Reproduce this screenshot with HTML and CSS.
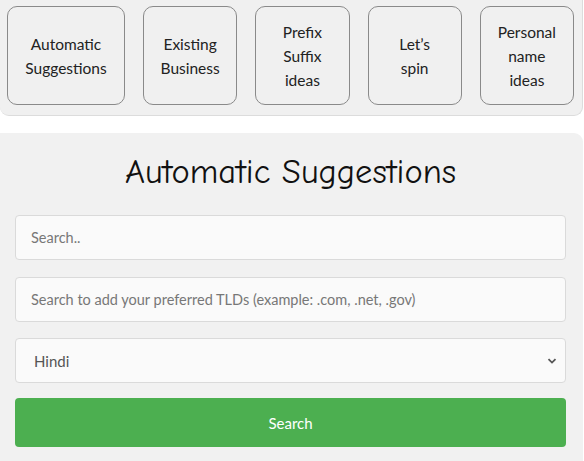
FILE: index.html
```html
<!DOCTYPE html>
<html lang="en">
<head>
    <meta charset="UTF-8">
    <meta name="viewport" content="width=device-width, initial-scale=1.0">
    <title>Domain Name Ideas</title>
    <link rel="stylesheet" href="styles.css">
</head>
<body>
    <!-- Onglets -->
    <nav class="tabs">
        <button class="tab tab-wide">Automatic<br>Suggestions</button>
        <button class="tab">Existing<br>Business</button>
        <button class="tab">Prefix<br>Suffix<br>ideas</button>
        <button class="tab">Let’s<br>spin</button>
        <button class="tab">Personal<br>name<br>ideas</button>
    </nav>

    <!-- Formulaire -->
    <div class="panel">
        <h1>Automatic Suggestions</h1>
        <form class="search-form">
            <input type="text" class="field" placeholder="Search..">
            <input type="text" class="field" placeholder="Search to add your preferred TLDs (example: .com, .net, .gov)">
            <div class="select-wrap">
                <select class="field">
                    <option>Hindi</option>
                    <option>English</option>
                </select>
                <svg class="chevron" width="10" height="6" viewBox="0 0 10 6">
                    <path d="M1.5 1.2 L5 4.6 L8.5 1.2" fill="none" stroke="#555" stroke-width="1.8"/>
                </svg>
            </div>
            <button type="button" class="search-btn">Search</button>
        </form>
    </div>
</body>
</html>
```

FILE: styles.css
```css
/* CSS */
body {
    font-family: Lato, "Open Sans", sans-serif;
    background-color: #ffffff;
    margin: 0;
    padding: 0;
}

.tabs {
    display: flex;
    gap: 18px;
    padding: 6px 8px 10px 7px;
    width: 583px;
    box-sizing: border-box;
    background-color: #f0f0f0;
    border: 1px solid #dcdcdc;
    border-top: none;
    border-left: none;
    border-radius: 0 0 9px 9px;
}

.tab {
    flex: 1 1 0;
    height: 99px;
    padding: 0 4px;
    background-color: #f0f0f0;
    border: 1px solid #8a8a8a;
    border-radius: 10px;
    font-family: inherit;
    font-size: 15.5px;
    line-height: 24px;
    color: #222;
    cursor: pointer;
}

.tab-wide {
    flex: 0 0 118px;
}

.panel {
    margin-top: 17px;
    width: 583px;
    min-height: 330px;
    box-sizing: border-box;
    padding: 14px 17px 14px 15px;
    background-color: #f1f1f1;
    border-radius: 0 9px 0 0;
}

.panel h1 {
    margin: 0 0 18px;
    text-align: center;
    font-family: "Comic Sans MS", "Comic Neue", "DejaVu Sans", sans-serif;
    font-weight: normal;
    font-size: 34.5px;
    line-height: 50px;
    color: #111;
}

.search-form {
    display: flex;
    flex-direction: column;
    gap: 17px;
}

.field {
    width: 100%;
    height: 45px;
    box-sizing: border-box;
    padding: 0 15px;
    background-color: #fafafa;
    border: 1px solid #dadada;
    border-radius: 4px;
    font-family: inherit;
    font-size: 14.5px;
    color: #444;
    outline: none;
}

.field::placeholder {
    color: #777;
}

.select-wrap {
    position: relative;
    margin-top: -1px;
}

.select-wrap select {
    appearance: none;
    -webkit-appearance: none;
    color: #555;
    padding-left: 18px;
    font-size: 15px;
}

.chevron {
    position: absolute;
    right: 9px;
    top: 20px;
    pointer-events: none;
}

.search-btn {
    height: 49px;
    margin-top: -2px;
    background-color: #4caf50;
    color: white;
    border: none;
    border-radius: 4px;
    font-family: inherit;
    font-size: 15px;
    cursor: pointer;
}

.search-btn:hover {
    background-color: #45a049;
}
```
